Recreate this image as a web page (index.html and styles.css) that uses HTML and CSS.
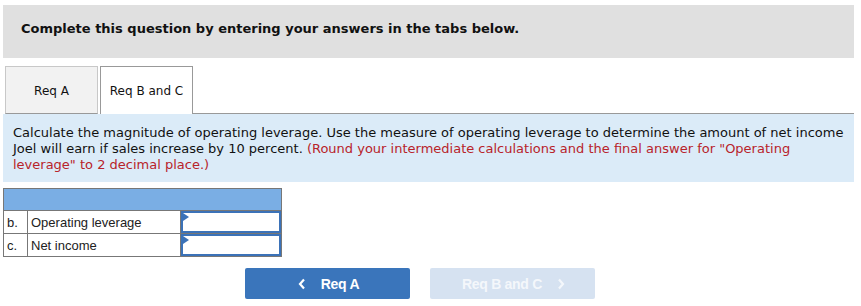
FILE: index.html
```html
<!DOCTYPE html>
<html>
<head>
<meta charset="utf-8">
<link rel="stylesheet" href="styles.css">
</head>
<body>
<div class="page">
  <div class="header">Complete this question by entering your answers in the tabs below.</div>
  <div class="tabs">
    <div class="tab tab-inactive">Req A</div>
    <div class="tab tab-active">Req B and C</div>
    <div class="tab-fill"></div>
  </div>
  <div class="instructions">
    Calculate the magnitude of operating leverage. Use the measure of operating leverage to determine the amount of net income Joel will earn if sales increase by 10 percent. <span class="note">(Round your intermediate calculations and the final answer for "Operating leverage" to 2 decimal place.)</span>
  </div>
  <table class="answers">
    <tr class="head"><td colspan="3"></td></tr>
    <tr>
      <td class="letter">b.</td>
      <td class="label">Operating leverage</td>
      <td class="input-cell"><div class="input"><span class="flag"></span></div></td>
    </tr>
    <tr>
      <td class="letter">c.</td>
      <td class="label">Net income</td>
      <td class="input-cell"><div class="input"><span class="flag"></span></div></td>
    </tr>
  </table>
  <div class="nav">
    <button class="btn btn-prev">
      <svg class="chev" width="8" height="12" viewBox="0 0 8 12"><path d="M6 1.5 L2 6 L6 10.5" fill="none" stroke="#fff" stroke-width="2.2"/></svg>
      <span>Req A</span>
    </button>
    <button class="btn btn-next">
      <span>Req B and C</span>
      <svg class="chev" width="8" height="12" viewBox="0 0 8 12"><path d="M2 1.5 L6 6 L2 10.5" fill="none" stroke="#fff" stroke-width="2.2"/></svg>
    </button>
  </div>
</div>
</body>
</html>
```
FILE: styles.css
```css
html, body {
  margin: 0;
  padding: 0;
  background: #fff;
}
.page {
  width: 851px;
  margin-left: 3px;
  padding-top: 5px;
  font-family: "DejaVu Sans", Verdana, sans-serif;
  color: #000;
}
.header {
  height: 53px;
  background: #e0e0e0;
  box-sizing: border-box;
  padding: 16px 0 0 18px;
  font-size: 13px;
  font-weight: bold;
  line-height: 16px;
  color: #111;
}
.tabs {
  display: flex;
  margin-top: 8px;
  padding-left: 2px;
  height: 48px;
}
.tab {
  box-sizing: border-box;
  height: 48px;
  display: flex;
  align-items: center;
  justify-content: center;
  font-size: 12px;
  color: #111;
  padding-top: 1px;
}
.tab-inactive {
  width: 93px;
  background: #f2f2f2;
  border: 1px solid #c8c8c8;
  border-bottom: 1px solid #999;
  margin-right: 2px;
}
.tab-active {
  width: 93px;
  background: #fff;
  border: 1px solid #999;
  border-bottom: none;
}
.tab-fill {
  flex: 1;
  border-bottom: 1px solid #999;
}
.instructions {
  background: #dbebf8;
  padding: 11px 10px 9px 10px;
  font-size: 13px;
  line-height: 16px;
  color: #111;
  height: 48px;
}
.note {
  color: #b8232a;
}
.answers {
  margin-top: 6px;
  border-collapse: collapse;
  font-family: "Liberation Sans", Arial, sans-serif;
  font-size: 13px;
  color: #222;
}
.answers td {
  border: 1px solid #777;
  padding: 0;
  height: 22px;
}
.answers .head td {
  background: #7aaee4;
  height: 21px;
}
.letter {
  width: 24px;
  padding-left: 3px !important;
  box-sizing: border-box;
}
.label {
  width: 149px;
  padding-left: 3px !important;
}
.input-cell {
  width: 100px;
  padding: 0 !important;
}
.input {
  position: relative;
  box-sizing: border-box;
  height: 22px;
  border: 2px solid #3b72b8;
  background: #fff;
}
.flag {
  position: absolute;
  left: 0;
  top: 0;
  width: 0;
  height: 0;
  border-top: 4px solid transparent;
  border-bottom: 4px solid transparent;
  border-left: 6px solid #3b72b8;
}
.nav {
  display: flex;
  gap: 20px;
  margin-top: 11px;
  padding-left: 242px;
}
.btn {
  width: 165px;
  height: 31px;
  border: none;
  border-radius: 2px;
  font-family: "Liberation Sans", Arial, sans-serif;
  font-size: 14px;
  font-weight: bold;
  color: #fff;
  display: flex;
  align-items: center;
  justify-content: center;
  gap: 15px;
  padding: 0 0 0 2px;
  letter-spacing: -0.3px;
}
.btn-prev {
  background: #3a75bb;
}
.btn-next {
  background: #d6e2f1;
  color: #f4f7fb;
}
.btn-next .chev path {
  stroke: #f4f7fb;
}
```
